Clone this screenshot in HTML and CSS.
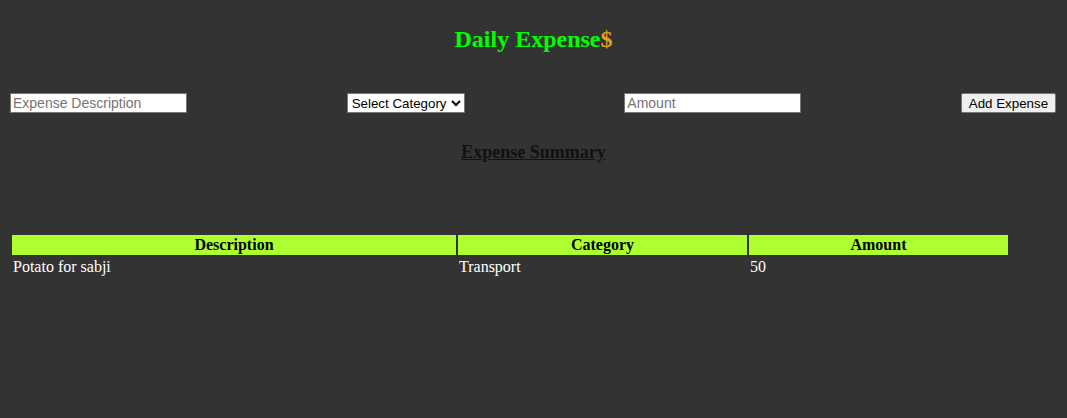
FILE: index.html
```html
<!DOCTYPE html>
<html>
<head>
    <title>Daily Expenses</title>
    <link rel="stylesheet" href="styles.css">
</head>
<body>
    <!-- Titulo -->
    <h2 class="title">Daily Expense<span class="dollar">$</span></h2>

    <!-- Formulario -->
    <div class="form-row">
        <input type="text" placeholder="Expense Description">
        <select>
            <option>Select Category</option>
            <option>Food</option>
            <option>Transport</option>
            <option>Other</option>
        </select>
        <input type="number" placeholder="Amount">
        <button>Add Expense</button>
    </div>

    <h3 class="summary">Expense Summary</h3>

    <!-- Tabla de gastos -->
    <div class="table-wrap">
        <table>
            <thead>
                <tr>
                    <th class="col-desc">Description</th>
                    <th class="col-cat">Category</th>
                    <th class="col-amt">Amount</th>
                </tr>
            </thead>
            <tbody>
                <tr>
                    <td>Potato for sabji</td>
                    <td>Transport</td>
                    <td>50</td>
                </tr>
            </tbody>
        </table>
    </div>
</body>
</html>
```

FILE: styles.css
```css
body {
    margin: 8px;
    background-color: #333333;
    font-family: "Liberation Serif", "Times New Roman", serif;
    color: #fff;
}

.title {
    text-align: center;
    color: #00ff00;
    font-size: 24px;
    margin: 17px 0 0;
    line-height: 28px;
}

.dollar {
    color: #e8a020;
}

.form-row {
    display: flex;
    justify-content: space-between;
    align-items: center;
    margin-top: 40px;
    padding: 0 3px 0 2px;
}

.form-row input,
.form-row select,
.form-row button {
    font-family: "Liberation Sans", Arial, sans-serif;
    font-size: 13.33px;
}

.form-row input {
    width: 177px;
    height: 20px;
    box-sizing: border-box;
    border: 1px solid #767676;
    padding: 1px 2px;
    background: #fff;
    font-size: 14px;
}

.form-row input::placeholder {
    color: #757575;
}

.form-row select {
    width: 118px;
    height: 20px;
    border: 1px solid #767676;
    background: #fff;
    color: #000;
    padding: 0;
}

.form-row button {
    height: 20px;
    width: 95px;
    padding: 0 6px;
    border: 1px solid #767676;
    border-radius: 2px;
    background: #efefef;
    color: #000;
}

.summary {
    text-align: center;
    color: #111;
    text-decoration: underline;
    font-size: 18px;
    margin: 28px 0 0;
    line-height: 22px;
}

.table-wrap {
    padding: 0 2px;
    margin-top: 70px;
}

table {
    width: 1000px;
    border-spacing: 2px;
    font-size: 16px;
}

th {
    background-color: #adff2f;
    color: #000;
    height: 20px;
    padding: 0 1px;
    line-height: 18px;
}

td {
    padding: 1px;
    text-align: left;
}

.col-desc {
    width: 442px;
}

.col-cat {
    width: 287px;
}
```
